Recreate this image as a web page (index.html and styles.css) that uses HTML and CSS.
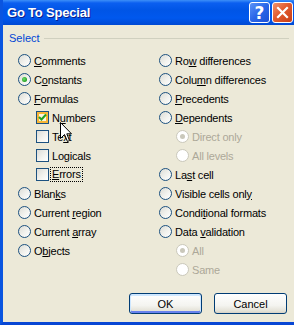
FILE: index.html
```html
<!DOCTYPE html>
<html lang="en">
<head>
    <meta charset="UTF-8">
    <title>Go To Special</title>
    <link rel="stylesheet" href="styles.css">
</head>
<body>
    <div class="window">
        <div class="titlebar">
            <span class="title">Go To Special</span>
            <div class="title-buttons">
                <span class="tbtn help">?</span>
                <span class="tbtn close">
                    <svg width="19" height="19" viewBox="0 0 19 19">
                        <path d="M5 5 L14 14 M14 5 L5 14" stroke="#fff" stroke-width="2.2" stroke-linecap="square"/>
                    </svg>
                </span>
            </div>
        </div>

        <div class="content">
            <div class="group-head">
                <span class="group-label">Select</span>
                <span class="group-line"></span>
            </div>

            <div class="columns">
                <div class="col">
                    <div class="row"><span class="radio"></span><span class="label"><u>C</u>omments</span></div>
                    <div class="row"><span class="radio checked"></span><span class="label">C<u>o</u>nstants</span></div>
                    <div class="row"><span class="radio"></span><span class="label"><u>F</u>ormulas</span></div>
                    <div class="row sub-check">
                        <span class="checkbox checked hover">
                            <svg width="11" height="11" viewBox="0 0 11 11">
                                <path d="M2 5 L4.5 7.5 L9 2.5" fill="none" stroke="#21a121" stroke-width="2"/>
                            </svg>
                        </span>
                        <span class="label">N<u>u</u>mbers</span>
                    </div>
                    <div class="row sub-check"><span class="checkbox"></span><span class="label">Te<u>x</u>t</span></div>
                    <div class="row sub-check"><span class="checkbox"></span><span class="label">Lo<u>g</u>icals</span></div>
                    <div class="row sub-check"><span class="checkbox"></span><span class="label focus"><u>E</u>rrors</span></div>
                    <div class="row"><span class="radio"></span><span class="label">Blan<u>k</u>s</span></div>
                    <div class="row"><span class="radio"></span><span class="label">Current <u>r</u>egion</span></div>
                    <div class="row"><span class="radio"></span><span class="label">Current <u>a</u>rray</span></div>
                    <div class="row"><span class="radio"></span><span class="label">O<u>b</u>jects</span></div>
                </div>
                <div class="col">
                    <div class="row"><span class="radio"></span><span class="label">Ro<u>w</u> differences</span></div>
                    <div class="row"><span class="radio"></span><span class="label">Colu<u>m</u>n differences</span></div>
                    <div class="row"><span class="radio"></span><span class="label"><u>P</u>recedents</span></div>
                    <div class="row"><span class="radio"></span><span class="label"><u>D</u>ependents</span></div>
                    <div class="row sub-radio disabled"><span class="radio checked"></span><span class="label">Direct only</span></div>
                    <div class="row sub-radio disabled"><span class="radio"></span><span class="label">All levels</span></div>
                    <div class="row"><span class="radio"></span><span class="label">La<u>s</u>t cell</span></div>
                    <div class="row"><span class="radio"></span><span class="label">Visible cells onl<u>y</u></span></div>
                    <div class="row"><span class="radio"></span><span class="label">Condi<u>t</u>ional formats</span></div>
                    <div class="row"><span class="radio"></span><span class="label">Data <u>v</u>alidation</span></div>
                    <div class="row sub-radio disabled"><span class="radio checked"></span><span class="label">All</span></div>
                    <div class="row sub-radio disabled"><span class="radio"></span><span class="label">Same</span></div>
                </div>
            </div>

            <div class="actions">
                <button class="btn default">OK</button>
                <button class="btn">Cancel</button>
            </div>
        </div>

        <!-- mouse pointer over "Numbers" -->
        <svg class="cursor" width="13" height="21" viewBox="0 0 13 21">
            <path d="M0.5 0.5 V16.5 L4.5 12.5 L7.5 19.5 L9.5 18.5 L6.8 11.8 H11.5 Z" fill="#fff" stroke="#000"/>
        </svg>
    </div>
</body>
</html>
```

FILE: styles.css
```css
* {
    margin: 0;
    padding: 0;
    box-sizing: border-box;
}

body {
    font-family: 'Liberation Sans', Arial, sans-serif;
    font-size: 11px;
    color: #000;
    background: #ece9d8;
}

.window {
    position: relative;
    width: 294px;
    height: 325px;
    display: flex;
    flex-direction: column;
    border-left: 3px solid #0a55e0;
    border-bottom: 3px solid #0846d4;
    background: #ece9d8;
    overflow: hidden;
}

/* title bar */
.titlebar {
    height: 25px;
    margin-left: -3px;
    display: flex;
    align-items: center;
    justify-content: space-between;
    padding: 0 1px 0 7px;
    background: linear-gradient(to bottom, #3d8ff8 0, #0b5ff0 3px, #0055e6 10px, #0058ee 18px, #0049d3 25px);
}

.title {
    color: #fff;
    font-weight: bold;
    font-size: 13px;
    letter-spacing: -0.2px;
    text-shadow: 1px 1px #0a1d8a;
}

.title-buttons {
    display: flex;
    gap: 2px;
}

.tbtn {
    width: 21px;
    height: 21px;
    border: 1px solid #fff;
    border-radius: 3px;
    display: flex;
    align-items: center;
    justify-content: center;
    color: #fff;
}

.help {
    background: linear-gradient(135deg, #5a93f7 0%, #2a66e8 50%, #1c50d6 100%);
    font-weight: bold;
    font-size: 17px;
    font-family: 'DejaVu Sans', sans-serif;
}

.close {
    background: linear-gradient(135deg, #f0936f 0%, #e25a2e 45%, #c73e16 100%);
}

/* dialog body */
.content {
    flex: 1;
    display: flex;
    flex-direction: column;
    padding: 6px 5px 0 6px;
}

.group-head {
    height: 14px;
    display: flex;
    align-items: center;
    gap: 4px;
}

.group-label {
    color: #0046d5;
}

.group-line {
    flex: 1;
    height: 1px;
    background: #d0d0bf;
}

.columns {
    display: grid;
    grid-template-columns: 141px 1fr;
    margin-top: 6px;
    padding-left: 9px;
}

.col {
    display: flex;
    flex-direction: column;
}

.row {
    height: 19px;
    display: flex;
    align-items: center;
    gap: 3px;
    letter-spacing: -0.2px;
    white-space: nowrap;
}

.sub-check {
    padding-left: 18px;
}

.sub-radio {
    padding-left: 17px;
}

.disabled .label {
    color: #aca899;
}

.label u {
    text-underline-offset: 1px;
}

.label.focus {
    outline: 1px dotted #000;
    outline-offset: 0;
    padding: 0 1px;
    margin-left: -1px;
    line-height: 13px;
}

/* radio buttons */
.radio {
    width: 13px;
    height: 13px;
    flex: none;
    border: 1px solid #1c5180;
    border-radius: 50%;
    background: linear-gradient(135deg, #dcdcd5 0%, #f2f2ee 55%, #ffffff 100%);
    position: relative;
}

.radio.checked::after {
    content: '';
    position: absolute;
    left: 3px;
    top: 3px;
    width: 5px;
    height: 5px;
    border-radius: 50%;
    background: radial-gradient(circle at 40% 40%, #6fdc6f 0, #21a121 70%);
}

.disabled .radio {
    border-color: #cac8bb;
    background: #fff;
}

.disabled .radio.checked::after {
    background: #cac8bb;
}

/* check boxes */
.checkbox {
    width: 13px;
    height: 13px;
    flex: none;
    border: 1px solid #1c5180;
    background: linear-gradient(135deg, #dcdcd7 0%, #f4f4f0 60%, #ffffff 100%);
    display: flex;
    align-items: center;
    justify-content: center;
}

.checkbox.hover {
    box-shadow: inset 0 0 0 2px #f8b636;
    background: #fdf4df;
}

.checkbox svg {
    position: relative;
}

/* buttons */
.actions {
    margin-top: 14px;
    padding-right: 2px;
    display: flex;
    justify-content: flex-end;
    gap: 12px;
}

.btn {
    width: 73px;
    height: 21px;
    font-family: 'Liberation Sans', Arial, sans-serif;
    font-size: 11px;
    color: #000;
    border: 1px solid #003c74;
    border-radius: 3px;
    background: linear-gradient(to bottom, #ffffff 0%, #f4f4f0 60%, #e3e1d6 90%, #d6d0c5 100%);
}

.btn.default {
    box-shadow: inset 0 1px 0 1px #cee7ff, inset 0 -1px 0 1px #6982ee;
}

/* pointer overlay */
.cursor {
    position: absolute;
    left: 57px;
    top: 122px;
}
```
